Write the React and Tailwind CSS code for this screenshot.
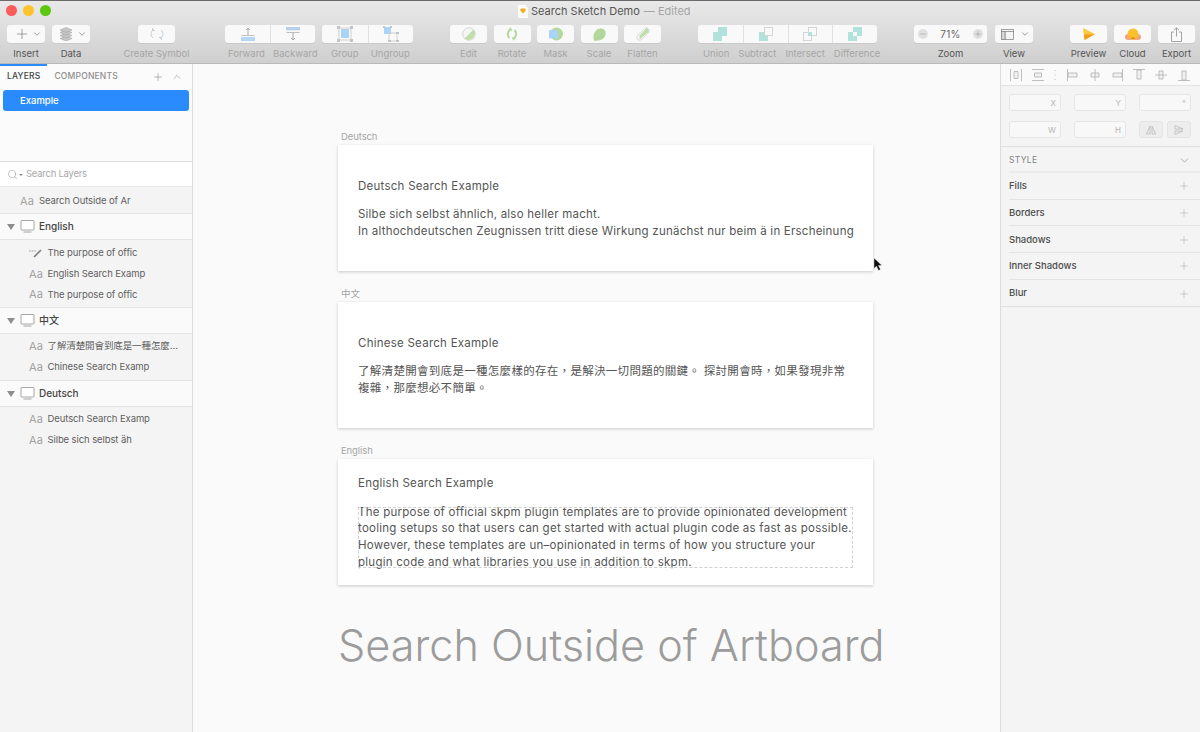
import { Plus, Minus, ChevronDown, ChevronUp, Search } from "lucide-react";

const FONT = "font-['Inter','Noto_Sans_CJK_TC',sans-serif]";

// Toolbar icons
const Icon = {
  insert: <Plus size={16} strokeWidth={1} className="text-[#777]" />,
  data: (
    <svg width="14" height="14" viewBox="0 0 14 14" fill="#c6c6c6" stroke="#a0a0a0" strokeWidth="0.5">
      <path d="M7 9l6 2.500-6 2.500-6-2.500z" />
      <path d="M7 6l6 2.500-6 2.500-6-2.500z" />
      <path d="M7 3l6 2.500L7 8 1 5.500z" />
      <path d="M7 .5l6 2.500-6 2.500L1 3z" />
    </svg>
  ),
  symbol: (
    <svg width="14" height="14" viewBox="0 0 14 14" fill="none" stroke="#c4d0d6" strokeWidth="1">
      <path d="M3 11a5 5 0 0 1 1-8.500M2.500 1v2.500H5" />
      <path d="M11 3a5 5 0 0 1-1 8.500M11.500 13v-2.500H9" />
    </svg>
  ),
  forward: (
    <svg width="14" height="14" viewBox="0 0 14 14" fill="none">
      <path d="M7 8V1M5 3l2-2 2 2" stroke="#a9a9a9" strokeWidth="1" />
      <path d="M.5 8.500h13" stroke="#c0c0c0" strokeWidth="1" />
      <rect x="0" y="10" width="14" height="4" fill="#b4d6f5" />
    </svg>
  ),
  backward: (
    <svg width="14" height="14" viewBox="0 0 14 14" fill="none">
      <rect x="0" y="0" width="14" height="3" fill="#b4d6f5" stroke="#c0c0c0" strokeWidth="0.5" />
      <path d="M.5 5.500h13" stroke="#c0c0c0" strokeWidth="1" />
      <path d="M7 6v7M5 11l2 2 2-2" stroke="#a9a9a9" strokeWidth="1" />
    </svg>
  ),
  group: (
    <svg width="16" height="16" viewBox="0 0 16 16" fill="none">
      <rect x="2" y="2" width="12" height="12" stroke="#d0d0d0" strokeWidth="1" />
      <rect x="4" y="3" width="8" height="9" fill="#a9d3f7" />
      <rect x="0" y="0" width="3" height="3" fill="#c4c4c4" />
      <rect x="13" y="0" width="3" height="3" fill="#c4c4c4" />
      <rect x="0" y="13" width="3" height="3" fill="#c4c4c4" />
      <rect x="13" y="13" width="3" height="3" fill="#c4c4c4" />
    </svg>
  ),
  ungroup: (
    <svg width="16" height="16" viewBox="0 0 16 16" fill="none">
      <rect x="1" y="1" width="7" height="7" fill="#a9d3f7" />
      <rect x="6" y="7" width="8" height="8" stroke="#d0d0d0" strokeWidth="1" />
      <rect x="0" y="0" width="2" height="2" fill="#c4c4c4" />
      <rect x="7" y="0" width="2" height="2" fill="#c4c4c4" />
      <rect x="13" y="6" width="3" height="2" fill="#c4c4c4" />
      <rect x="13" y="14" width="3" height="2" fill="#c4c4c4" />
      <rect x="5" y="14" width="3" height="2" fill="#c4c4c4" />
    </svg>
  ),
  edit: (
    <svg width="14" height="14" viewBox="0 0 14 14">
      <circle cx="7" cy="7" r="6.300" fill="#f5f5f5" stroke="#c9c9c9" strokeWidth="0.7" />
      <path d="M2.500 11.500L11.500 2.500A6.400 6.400 0 0 1 2.500 11.500z" fill="#c0dfa8" />
    </svg>
  ),
  rotate: (
    <svg width="14" height="14" viewBox="0 0 14 14" fill="none" stroke="#b5d89c" strokeWidth="2">
      <path d="M5 3C2.500 4.500 2 8.500 4.500 11" />
      <path d="M9 11C11.500 9.500 12 5.500 9.500 3" />
      <path d="M7 3.500L5.500 .5 3 3.500z" fill="#b5d89c" strokeWidth="0.5" />
      <path d="M7 10.500L8.500 13.500 11 10.500z" fill="#b5d89c" strokeWidth="0.5" />
    </svg>
  ),
  mask: (
    <svg width="14" height="14" viewBox="0 0 14 14">
      <circle cx="7.500" cy="7" r="6.500" fill="#b5d89c" />
      <rect x="0" y="3" width="9" height="8.500" rx="1" fill="#a9d3f7" />
    </svg>
  ),
  scale: (
    <svg width="13" height="13" viewBox="0 0 13 13">
      <path d="M1 12.500C-1 7 2.500 .5 7.500 .5c4 0 6 2.500 5 6-1 4-5 7-11.500 6z" fill="#b5d89c" />
      <path d="M1 12.500C3 10 8 9 11.500 8.500M7.500 .5C9 2.500 9.500 5 8 9" fill="none" stroke="#a3cc88" strokeWidth="0.6" />
    </svg>
  ),
  flatten: (
    <svg width="14" height="14" viewBox="0 0 14 14">
      <path d="M1 9L8.500 1.500a3 3 0 0 1 4.200 4.200L5 13a3 3 0 0 1-4-4z" fill="#f5f5f5" stroke="#c9c9c9" strokeWidth="0.6" />
      <path d="M3.500 12.500L12.500 5a3 3 0 0 0-2-3.800L3.500 8.500z" fill="#c0dfa8" />
    </svg>
  ),
  union: (
    <svg width="14" height="14" viewBox="0 0 14 14">
      <path d="M5 0h9v9H9v5H0V5h5z" fill="#b2e2dc" />
    </svg>
  ),
  subtract: (
    <svg width="14" height="14" viewBox="0 0 14 14">
      <path d="M0 5h5v4h4v5H0z" fill="#b2e2dc" />
      <rect x="5.500" y=".5" width="8" height="8" fill="none" stroke="#d4d4d4" />
    </svg>
  ),
  intersect: (
    <svg width="14" height="14" viewBox="0 0 14 14">
      <rect x=".5" y="5.500" width="8" height="8" fill="none" stroke="#d4d4d4" />
      <rect x="5.500" y=".5" width="8" height="8" fill="none" stroke="#d4d4d4" />
      <rect x="5" y="5" width="4" height="4" fill="#b2e2dc" />
    </svg>
  ),
  difference: (
    <svg width="14" height="14" viewBox="0 0 14 14">
      <path d="M5 0h9v9H9V5H5zM0 5h5v4h4v5H0z" fill="#b2e2dc" />
    </svg>
  ),
  view: (
    <svg width="13" height="11" viewBox="0 0 13 11" fill="none" stroke="#8a8a8a" strokeWidth="0.8">
      <rect x=".5" y=".5" width="12" height="10" fill="#f4f4f4" />
      <path d="M.5 2.500h12M4 2.500v8" />
      <rect x=".5" y="2.500" width="3.500" height="8" fill="#d8d8d8" />
    </svg>
  ),
  preview: (
    <svg width="12" height="12" viewBox="0 0 12 12">
      <path d="M0 0L12 6 1.500 12z" fill="#f8c93e" />
      <path d="M1 6.500h10.500L1.500 12z" fill="#f39a1e" />
    </svg>
  ),
  cloud: (
    <svg width="16" height="12" viewBox="0 0 16 12">
      <ellipse cx="3.500" cy="9" rx="3.500" ry="3" fill="#f3a27c" />
      <ellipse cx="12.500" cy="9" rx="3.500" ry="3" fill="#f3a27c" />
      <circle cx="8" cy="6" r="5.500" fill="#fbc02d" />
      <path d="M5.500 11.500a2.500 2.500 0 0 1 5 0z" fill="#ee8d1f" />
    </svg>
  ),
  export: (
    <svg width="11" height="15" viewBox="0 0 11 15" fill="none" stroke="#999" strokeWidth="0.9">
      <path d="M3 5H.5v9.500h10V5H8" />
      <path d="M5.500 9.500V1M3 3.200L5.500 .8 8 3.200" />
    </svg>
  ),
};

function ToolLabel({ children, dim }) {
  return (
    <span
      className={`h-[16px] mt-[3px] text-[9.500px] leading-[16px] whitespace-nowrap ${
        dim ? "text-[#a6a6a6]" : "text-[#555]"
      }`}
    >
      {children}
    </span>
  );
}

function ToolButton({ icon, label, dim = true }) {
  return (
    <div className="flex flex-col items-center w-[37px]">
      <div className="w-full h-[18px] bg-[#f9f9f9] rounded-[3px] flex items-center justify-center shadow-[0_0.5px_0_#bbb]">
        {icon}
      </div>
      <ToolLabel dim={dim}>{label}</ToolLabel>
    </div>
  );
}

// labelClass lets the caption row sit off the cell grid, as Sketch spaces them by text width
function ToolSplit({ items, w, labelClass }) {
  return (
    <div className="flex flex-col" style={{ width: w * items.length }}>
      <div className="h-[18px] bg-[#f9f9f9] rounded-[3px] flex shadow-[0_0.5px_0_#bbb]">
        {items.map((it, i) => (
          <div
            key={it.label}
            style={{ width: w }}
            className={`flex items-center justify-center border-[#e2e2e2] ${i > 0 ? "border-l" : ""}`}
          >
            {it.icon}
          </div>
        ))}
      </div>
      {labelClass ? (
        <div className={`flex ${labelClass}`}>
          {items.map((it) => (
            <div key={it.label} className="flex flex-col">
              <ToolLabel dim>{it.label}</ToolLabel>
            </div>
          ))}
        </div>
      ) : (
        <div className="flex">
          {items.map((it) => (
            <div key={it.label} style={{ width: w }} className="flex flex-col items-center">
              <ToolLabel dim>{it.label}</ToolLabel>
            </div>
          ))}
        </div>
      )}
    </div>
  );
}

function Toolbar() {
  return (
    <div className="h-[64px] shrink-0 bg-gradient-to-b from-[#e9e9e9] to-[#cfcfcf] border-t border-t-[#6b6b6b] border-b border-b-[#b9b9b9] flex flex-col">
      {/* title bar */}
      <div className="h-[23px] flex items-center relative">
        <div className="flex gap-[6px] pl-[6px] -mt-[4px]">
          <span className="w-[11px] h-[11px] rounded-full bg-[#fb5c57]" />
          <span className="w-[11px] h-[11px] rounded-full bg-[#fdc42d]" />
          <span className="w-[11px] h-[11px] rounded-full bg-[#5cc70f]" />
        </div>
        <div className="flex items-center ml-[467px] -mt-[3px] text-[11px] whitespace-nowrap">
          <svg width="10" height="13" viewBox="0 0 10 13" className="mr-[3px]">
            <path d="M0 0h7l3 3v10H0z" fill="#fbfbfb" />
            <path d="M2 5l1.200-1.500h3.600L8 5 5 8.500z" fill="#f7a81b" />
          </svg>
          <span className="text-[#555]">Search Sketch Demo</span>
          <span className="text-[#a4a4a4] ml-[4px]">— Edited</span>
        </div>
      </div>
      {/* tools */}
      <div className="flex pl-[7px] mt-[1px]">
        <div className="flex flex-col items-center w-[38px]">
          <div className="w-full h-[18px] bg-[#f9f9f9] rounded-[3px] flex items-center justify-between pl-[7px] pr-[3px] shadow-[0_0.5px_0_#bbb]">
            {Icon.insert}
            <ChevronDown size={10} strokeWidth={1.500} className="text-[#666]" />
          </div>
          <ToolLabel>Insert</ToolLabel>
        </div>
        <div className="flex flex-col items-center w-[38px] ml-[7px]">
          <div className="w-full h-[18px] bg-[#f9f9f9] rounded-[3px] flex items-center justify-between pl-[7px] pr-[3px] shadow-[0_0.5px_0_#bbb]">
            {Icon.data}
            <ChevronDown size={10} strokeWidth={1.500} className="text-[#666]" />
          </div>
          <ToolLabel>Data</ToolLabel>
        </div>
        <div className="ml-[48px]">
          <ToolButton dim icon={Icon.symbol} label="Create Symbol" />
        </div>
        <div className="ml-[50px]">
          <ToolSplit
            w={45}
            labelClass="pl-[3px] gap-[8px]"
            items={[
              { label: "Forward", icon: Icon.forward },
              { label: "Backward", icon: Icon.backward },
            ]}
          />
        </div>
        <div className="ml-[7px]">
          <ToolSplit
            w={45.500}
            items={[
              { label: "Group", icon: Icon.group },
              { label: "Ungroup", icon: Icon.ungroup },
            ]}
          />
        </div>
        <div className="flex gap-[6.500px] ml-[37px]">
          <ToolButton icon={Icon.edit} label="Edit" />
          <ToolButton icon={Icon.rotate} label="Rotate" />
          <ToolButton icon={Icon.mask} label="Mask" />
          <ToolButton icon={Icon.scale} label="Scale" />
          <ToolButton icon={Icon.flatten} label="Flatten" />
        </div>
        <div className="ml-[37px]">
          <ToolSplit
            w={44.750}
            labelClass="pl-[5px] gap-[9px]"
            items={[
              { label: "Union", icon: Icon.union },
              { label: "Subtract", icon: Icon.subtract },
              { label: "Intersect", icon: Icon.intersect },
              { label: "Difference", icon: Icon.difference },
            ]}
          />
        </div>
        <div className="flex flex-col items-center w-[73px] ml-[37px]">
          <div className="w-full h-[18px] bg-[#f9f9f9] rounded-[3px] flex items-center justify-between px-[4px] shadow-[0_0.5px_0_#bbb]">
            <span className="w-[10px] h-[10px] rounded-full bg-[#e0e0e0] flex items-center justify-center">
              <Minus size={8} strokeWidth={1} className="text-[#666]" />
            </span>
            <span className="text-[10px] text-[#666] tracking-[0.3px]">71%</span>
            <span className="w-[10px] h-[10px] rounded-full bg-[#e0e0e0] flex items-center justify-center">
              <Plus size={8} strokeWidth={1} className="text-[#666]" />
            </span>
          </div>
          <ToolLabel>Zoom</ToolLabel>
        </div>
        <div className="flex flex-col items-center w-[38px] ml-[8px]">
          <div className="w-full h-[18px] bg-[#f9f9f9] rounded-[3px] flex items-center justify-between pl-[6px] pr-[3px] shadow-[0_0.5px_0_#bbb]">
            {Icon.view}
            <ChevronDown size={10} strokeWidth={1.500} className="text-[#666]" />
          </div>
          <ToolLabel>View</ToolLabel>
        </div>
        <div className="flex gap-[7px] ml-[37px]">
          <ToolButton dim={false} icon={Icon.preview} label="Preview" />
          <ToolButton dim={false} icon={Icon.cloud} label="Cloud" />
          <ToolButton dim={false} icon={Icon.export} label="Export" />
        </div>
      </div>
    </div>
  );
}

function TextIcon() {
  return <span className="text-[11px] text-[#a2a2a2] tracking-[0.2px]">Aa</span>;
}

function ArtboardRow({ name }) {
  return (
    <div className="h-[25px] bg-[#fafafa] border-y border-[#e3e3e3] box-content flex items-center pl-[7px]">
      <span className="w-0 h-0 border-x-[4px] border-x-transparent border-t-[6px] border-t-[#8d8d8d]" />
      <svg width="15" height="13" viewBox="0 0 15 13" fill="none" stroke="#8f8f8f" strokeWidth="0.8" className="ml-[5px]">
        <rect x="1" y=".5" width="13" height="9.500" rx="0.8" fill="#fff" />
        <path d="M3.500 12h8" />
      </svg>
      <span className="ml-[4px] text-[10px] font-medium text-[#444]">{name}</span>
    </div>
  );
}

function LayerRow({ name, curve }) {
  return (
    <div className="h-[20.700px] flex items-center pl-[29px]">
      <span className="w-[18.500px] flex">
        {curve ? (
          <svg width="13" height="9" viewBox="0 0 13 9" fill="none">
            <path d="M0 2h7" stroke="#bbb" strokeWidth="1.500" strokeDasharray="1 0.500" />
            <path d="M12 1L5 8" stroke="#777" strokeWidth="1.500" />
          </svg>
        ) : (
          <TextIcon />
        )}
      </span>
      <span className="text-[9.500px] text-[#5f5f5f] tracking-[-0.1px] whitespace-nowrap">{name}</span>
    </div>
  );
}

function Sidebar() {
  return (
    <aside className="w-[193px] shrink-0 bg-[#f4f4f4] border-r border-[#dcdcdc] flex flex-col">
      <div className="h-[98px] bg-[#fbfbfb] border-b border-[#dedede] shrink-0">
        <div className="h-[24px] flex items-center pl-[7px] pr-[9px] pt-px relative">
          <span className="absolute left-0 top-0 w-[47px] h-[2px] bg-[#2a8bff]" />
          <span className="text-[8.500px] font-medium text-[#444] tracking-[0.2px]">LAYERS</span>
          <span className="ml-[14px] text-[8.500px] font-medium text-[#8e8e8e] tracking-[0.2px]">COMPONENTS</span>
          <Plus size={12} strokeWidth={1} className="ml-auto text-[#777]" />
          <ChevronUp size={12} strokeWidth={1} className="ml-[7px] text-[#777]" />
        </div>
        <div className="mx-[3px] mt-[2px] h-[21px] pt-px bg-[#2a8bff] rounded-[3px] flex items-center pl-[17px] text-[9.500px] font-medium text-white">
          Example
        </div>
      </div>
      <div className="h-[25px] pt-px bg-white border-b border-[#e8e8e8] flex items-center pl-[7px] shrink-0">
        <Search size={11} strokeWidth={1} className="text-[#888]" />
        <span className="w-0 h-0 ml-[1px] border-x-[2px] border-x-transparent border-t-[2px] border-t-[#888]" />
        <span className="ml-[3px] text-[9.500px] text-[#a8a8a8] tracking-[-0.25px]">Search Layers</span>
      </div>
      <div className="h-[26px] flex items-center pl-[20px] pt-[3px] shrink-0">
        <span className="w-[19px] flex">
          <TextIcon />
        </span>
        <span className="text-[9.500px] text-[#5f5f5f] tracking-[-0.1px]">Search Outside of Ar</span>
      </div>
      <ArtboardRow name="English" />
      <div className="pt-[3px] pb-[2px]">
        <LayerRow curve name="The purpose of offic" />
        <LayerRow name="English Search Examp" />
        <LayerRow name="The purpose of offic" />
      </div>
      <ArtboardRow name="中文" />
      <div className="pt-[2px] pb-[2.600px]">
        <LayerRow name="了解清楚開會到底是一種怎麼…" />
        <LayerRow name="Chinese Search Examp" />
      </div>
      <ArtboardRow name="Deutsch" />
      <div className="pt-[2px]">
        <LayerRow name="Deutsch Search Examp" />
        <LayerRow name="Silbe sich selbst äh" />
      </div>
    </aside>
  );
}

function Artboard({ label, children, title, compact }) {
  return (
    <div>
      <div className="h-[16px] pl-[3px] leading-[16px] text-[9.500px] text-[#a5a5a5] tracking-[-0.1px]">{label}</div>
      <div
        className={`h-[126px] bg-white shadow-[0_1px_3px_rgba(0,0,0,0.2)] pl-[20px] text-[#555] ${
          compact ? "pt-[15px]" : "pt-[32px]"
        }`}
      >
        <div className="text-[11.500px] leading-[18px] tracking-[0.25px]">{title}</div>
        {children}
      </div>
    </div>
  );
}

function Canvas() {
  return (
    <main className="flex-1 bg-[#fafafa] pl-[145px] pt-[65px] relative">
      <div className="w-[535px] flex flex-col gap-[15px]">
        <Artboard label="Deutsch" title="Deutsch Search Example">
          <p className="mt-[11px] text-[11.500px] leading-[16.700px] tracking-[0.225px] whitespace-nowrap">
            Silbe sich selbst ähnlich, also heller macht.
            <br />
            In althochdeutschen Zeugnissen tritt diese Wirkung zunächst nur beim ä in Erscheinung
          </p>
        </Artboard>
        <Artboard label="中文" title="Chinese Search Example">
          <p className="mt-[11px] text-[11.500px] leading-[16.700px] tracking-[0.3px] whitespace-nowrap">
            了解清楚開會到底是一種怎麼樣的存在，是解決一切問題的關鍵。 探討開會時，如果發現非常
            <br />
            複雜，那麼想必不簡單。
          </p>
        </Artboard>
        <Artboard compact label="English" title="English Search Example">
          <p className="relative mt-[11.500px] text-[11.500px] leading-[16.700px] tracking-[0.25px] whitespace-nowrap">
            The purpose of official skpm plugin templates are to provide opinionated development
            <br />
            tooling setups so that users can get started with actual plugin code as fast as possible.
            <br />
            However, these templates are un–opinionated in terms of how you structure your
            <br />
            plugin code and what libraries you use in addition to skpm.
            {/* selection outline, drawn over the text */}
            <span className="absolute left-0 top-[3px] w-[495px] h-[61px] border border-dashed border-[#d0d0d0]" />
          </p>
        </Artboard>
      </div>
      <div className="mt-[34px] text-[43.200px] font-light leading-[52px] text-[#9c9c9c] whitespace-nowrap">
        Search Outside of Artboard
      </div>
      {/* mouse pointer */}
      <svg width="9" height="13" viewBox="0 0 9 13" className="absolute left-[681px] top-[194px]">
        <path d="M0 0v10.500l2.500-2.300L4.500 12.500 6.500 11.500 4.500 7.500H8z" fill="#111" stroke="#fff" strokeWidth="0.4" />
      </svg>
    </main>
  );
}

function AlignIcon({ d, w = 12 }) {
  return (
    <svg width={w} height="12" viewBox={`0 0 ${w} 12`} fill="#f0f0f0" stroke="#b0b0b0" strokeWidth="0.8">
      <path d={d} />
    </svg>
  );
}

const ALIGN = [
  { d: "M.5 0v12M11.500 0v12M4 2.500h4v7H4z" },
  { d: "M0 .5h12M0 11.500h12M2.500 4h7v4h-7z" },
  { d: "M1 1v1M1 5.500v1M1 10v1", w: 2 },
  { d: "M.5 0v12M1 4h9v4H1z" },
  { d: "M6 0v12M2 4h8v4H2z" },
  { d: "M11.500 0v12M2 4h9v4H2z" },
  { d: "M0 .5h12M4 1h4v9H4z" },
  { d: "M0 6h12M4 2h4v8H4z" },
  { d: "M0 11.500h12M4 2h4v9H4z" },
];

function Field({ label }) {
  return (
    <div className="w-[52px] h-[17px] bg-[#f8f8f8] border border-[#e6e6e6] rounded-[3px] flex items-center justify-end pr-[4px] text-[8px] text-[#b5b5b5]">
      {label}
    </div>
  );
}

function StyleRow({ name, last }) {
  return (
    <div
      className={`h-[26.700px] pt-px flex items-center justify-between pr-[10px] text-[9.500px] font-medium text-[#4d4d4d] ${
        last ? "" : "border-b border-[#e2e2e2]"
      }`}
    >
      {name}
      <Plus size={12} strokeWidth={1} className="text-[#a5a5a5]" />
    </div>
  );
}

function RightPanel() {
  return (
    <aside className="w-[200px] shrink-0 bg-[#f4f4f4] border-l border-[#dcdcdc] flex flex-col">
      <div className="h-[22px] bg-[#fafafa] border-b border-[#e2e2e2] flex items-center gap-[10.200px] pl-[9px] shrink-0">
        {ALIGN.map((icon) => (
          <AlignIcon key={icon.d} d={icon.d} w={icon.w} />
        ))}
      </div>
      <div className="h-[61px] border-b border-[#e0e0e0] pl-[8px] pr-[9px] pt-[8px] flex flex-col gap-[10px] shrink-0">
        <div className="flex justify-between">
          <Field label="X" />
          <Field label="Y" />
          <Field label="°" />
        </div>
        <div className="flex justify-between">
          <Field label="W" />
          <Field label="H" />
          <div className="flex w-[52px] justify-between">
            <div className="w-[24px] h-[17px] bg-[#ededed] border border-[#e4e4e4] rounded-[3px] flex items-center justify-center">
              <svg width="10" height="10" viewBox="0 0 10 10" fill="none" stroke="#b5b5b5" strokeWidth="0.7">
                <path d="M4 1v8H.5zM6 1v8h3.500z" />
              </svg>
            </div>
            <div className="w-[24px] h-[17px] bg-[#ededed] border border-[#e4e4e4] rounded-[3px] flex items-center justify-center">
              <svg width="10" height="10" viewBox="0 0 10 10" fill="none" stroke="#b5b5b5" strokeWidth="0.7">
                <path d="M1 4h8L1 .5zM1 6h8L1 9.500z" />
              </svg>
            </div>
          </div>
        </div>
      </div>
      <div className="pl-[8px]">
        <div className="h-[26px] pt-[2px] border-b-2 border-[#ececec] flex items-center justify-between pr-[9px] text-[8.500px] text-[#858585] tracking-[0.3px]">
          STYLE
          <ChevronDown size={13} strokeWidth={1} className="text-[#777]" />
        </div>
        <StyleRow name="Fills" />
        <StyleRow name="Borders" />
        <StyleRow name="Shadows" />
        <StyleRow name="Inner Shadows" />
        <StyleRow name="Blur" last />
      </div>
      <div className="border-b border-[#e0e0e0]" />
    </aside>
  );
}

export default function App() {
  return (
    <div className={`w-[1200px] h-[732px] overflow-hidden flex flex-col ${FONT}`}>
      <Toolbar />
      <div className="flex flex-1 min-h-0">
        <Sidebar />
        <Canvas />
        <RightPanel />
      </div>
    </div>
  );
}
